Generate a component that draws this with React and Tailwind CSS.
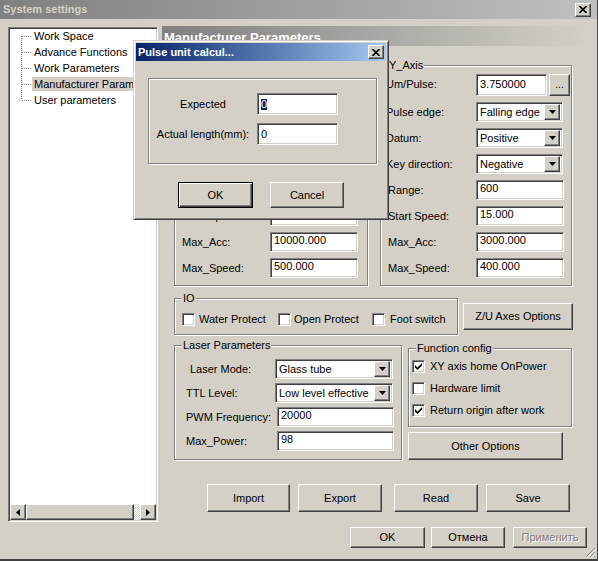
import React from 'react';

const sunken = 'border border-t-[#808080] border-l-[#808080] border-b-white border-r-white shadow-[inset_1px_1px_0_#404040,inset_-1px_-1px_0_#d4d0c8] bg-white';
const raised = 'border border-t-white border-l-white border-b-[#404040] border-r-[#404040] shadow-[inset_-1px_-1px_0_#808080] bg-[#d4d0c8]';
const etched = 'relative border border-[#808080] shadow-[inset_1px_1px_0_#fff,1px_1px_0_#fff]';

function Field({ value, className = '', selected }) {
  return (
    <div className={`${sunken} ${className} flex items-center pl-[3px] leading-none`}>
      {selected ? <span className="bg-[#0a246a] text-white">{value}</span> : value}
    </div>
  );
}

function Arrow({ dir = 'down' }) {
  if (dir === 'left') return <svg width="4" height="7" viewBox="0 0 4 7"><path d="M4 0v7L0 3.5z" fill="#000" /></svg>;
  if (dir === 'right') return <svg width="4" height="7" viewBox="0 0 4 7"><path d="M0 0v7l4-3.5z" fill="#000" /></svg>;
  return <svg width="7" height="4" viewBox="0 0 7 4"><path d="M0 0h7L3.5 4z" fill="#000" /></svg>;
}

function Combo({ value, className = '' }) {
  return (
    <div className={`${sunken} ${className} flex items-center pl-[3px] pr-[2px]`}>
      <span className="flex-1 whitespace-nowrap overflow-hidden">{value}</span>
      <div className={`${raised} w-[16px] h-[16px] shrink-0 flex items-center justify-center`}>
        <Arrow />
      </div>
    </div>
  );
}

function Btn({ children, className = '', disabled, isDefault }) {
  const base = isDefault
    ? 'border border-black bg-[#d4d0c8] shadow-[inset_1px_1px_0_#fff,inset_-1px_-1px_0_#404040,inset_-2px_-2px_0_#808080]'
    : raised;
  return (
    <div className={`${base} ${className} flex items-center justify-center ${disabled ? 'text-[#808080] [text-shadow:1px_1px_0_#fff]' : ''}`}>
      {children}
    </div>
  );
}

function Check({ checked }) {
  return (
    <div className={`${sunken} w-[13px] h-[13px] shrink-0 flex items-center justify-center`}>
      {checked && (
        <svg width="7" height="7" viewBox="0 0 7 7">
          <path d="M0 2 L2.5 4.5 L7 0 V2.5 L2.5 7 L0 4.5 Z" fill="#000" />
        </svg>
      )}
    </div>
  );
}

function XClose({ className = '' }) {
  return (
    <div className={`${raised} w-[16px] h-[14px] flex items-center justify-center ${className}`}>
      <svg width="8" height="7" viewBox="0 0 8 7">
        <path d="M0.5 0 L7.5 7 M7.5 0 L0.5 7" stroke="#000" strokeWidth="1.6" />
      </svg>
    </div>
  );
}

function Legend({ children }) {
  return <span className="absolute -top-[7px] left-[7px] px-[1px] bg-[#d4d0c8] leading-[13px]">{children}</span>;
}

function AxisGroup({ title, vals, className = '' }) {
  return (
    <div className={`${etched} ${className} pt-[7px] pb-[7px]`}>
      <Legend>{title}</Legend>
      <div className="flex flex-col gap-[6px]">
        <div className="flex items-center h-[23px]">
          <span className="w-[95px] pl-[5px]">Um/Pulse:</span>
          <Field value={vals[0]} className="w-[71px] h-[22px]" />
          <Btn className="w-[21px] h-[22px] ml-[2px] text-[10px]">...</Btn>
        </div>
        {[['Pulse edge:', vals[1]], ['Datum:', vals[2]], ['Key direction:', vals[3]]].map(([l, v]) => (
          <div key={l} className="flex items-center h-[20px]">
            <span className="w-[95px] pl-[5px]">{l}</span>
            <Combo value={v} className="w-[87px] h-[20px]" />
          </div>
        ))}
        {[['Range:', vals[4]], ['Start Speed:', vals[5]], ['Max_Acc:', vals[6]], ['Max_Speed:', vals[7]]].map(([l, v]) => (
          <div key={l} className="flex items-center h-[20px]">
            <span className="w-[95px] pl-[7px]">{l}</span>
            <Field value={v} className="w-[88px] h-[20px] items-start pt-[2px]" />
          </div>
        ))}
      </div>
    </div>
  );
}

const treeItems = ['Work Space', 'Advance Functions', 'Work Parameters', 'Manufacturer Parameters', 'User parameters'];

function Tree() {
  return (
    <div className={`${sunken} ml-[8px] mt-[8px] w-[150px] h-[495px] flex flex-col overflow-hidden`}>
      <div className="flex-1 pl-[1px]">
        {treeItems.map((t, i) => (
          <div key={t} className="flex items-center h-[16px]">
            <svg width="22" height="16" className="shrink-0">
              <line x1="11.5" y1={i === 0 ? 8 : 0} x2="11.5" y2={i === treeItems.length - 1 ? 8 : 16} stroke="#808080" strokeDasharray="1 1" />
              <line x1="12" y1="8.5" x2="22" y2="8.5" stroke="#808080" strokeDasharray="1 1" />
            </svg>
            <span className={`pl-[2px] pr-[2px] leading-[14px] whitespace-nowrap ${i === 3 ? 'bg-[#d4d0c8]' : ''}`}>{t}</span>
          </div>
        ))}
      </div>
      <div className="flex h-[16px] mx-[1px] mb-[1px]">
        <Btn className="w-[16px] h-[16px]"><Arrow dir="left" /></Btn>
        <Btn className="flex-1 h-[16px]" />
        <div className="w-[6px] h-[16px] bg-[repeating-conic-gradient(#fff_0_25%,#d4d0c8_0_50%)] bg-[length:2px_2px]" />
        <Btn className="w-[16px] h-[16px]"><Arrow dir="right" /></Btn>
      </div>
    </div>
  );
}

function Dialog() {
  return (
    <div className="absolute left-[133px] top-[40px] w-[256px] h-[180px] bg-[#d4d0c8] border border-t-[#d4d0c8] border-l-[#d4d0c8] border-b-[#404040] border-r-[#404040] shadow-[inset_1px_1px_0_#fff,inset_-1px_-1px_0_#808080] p-[2px] flex flex-col">
      <div className="h-[18px] bg-linear-to-r from-[#0a246a] to-[#a6caf0] flex items-center justify-between pl-[2px] pr-[2px]">
        <span className="text-white font-bold text-[11px]">Pulse unit calcul...</span>
        <XClose />
      </div>
      <div className={`${etched} mt-[17px] ml-[12px] w-[229px] h-[86px] pt-[14px] flex flex-col gap-[8px]`}>
        <div className="flex items-center h-[22px]">
          <span className="w-[108px] text-center">Expected</span>
          <Field value="0" selected className="w-[81px] h-[22px]" />
        </div>
        <div className="flex items-center h-[22px]">
          <span className="w-[108px] text-center">Actual length(mm):</span>
          <Field value="0" className="w-[81px] h-[22px]" />
        </div>
      </div>
      <div className="mt-[18px] ml-[42px] flex gap-[17px]">
        <Btn isDefault className="w-[75px] h-[26px]">OK</Btn>
        <Btn className="w-[74px] h-[26px]">Cancel</Btn>
      </div>
    </div>
  );
}

export default function App() {
  return (
    <div className="relative w-[598px] h-[561px] bg-[#d4d0c8] overflow-hidden border-r border-r-[#404040] border-b-2 border-b-[#404040] font-['Liberation_Sans',Arial,sans-serif] text-[11px] text-black">
      {/* window title */}
      <div className="h-[19px] bg-linear-to-r from-[#808080] to-[#c0c0c0] flex items-center justify-between pl-[3px] pr-[6px]">
        <span className="font-bold text-[#d4d0c8] text-[11px]">System settings</span>
        <XClose />
      </div>

      <div className="flex">
        <Tree />

        <div className="ml-[4px] mt-[7px] flex flex-col w-[433px]">
          <div className="h-[20px] w-[426px] bg-linear-to-r from-[#808080] to-[#d4d0c8] flex items-end pl-[2px]">
            <span className="text-white font-bold text-[13px] leading-[17px]">Manufacturer Parameters</span>
          </div>

          <div className="pl-[12px] flex flex-col">
            <div className="mt-[19px] flex gap-[12px]">
              <AxisGroup title="X_Axis" className="w-[194px]" vals={['6.329114', 'Falling edge', 'Positive', 'Negative', '900', '15.000', '10000.000', '500.000']} />
              <AxisGroup title="Y_Axis" className="w-[192px]" vals={['3.750000', 'Falling edge', 'Positive', 'Negative', '600', '15.000', '3000.000', '400.000']} />
            </div>

            <div className="mt-[12px] flex items-start gap-[5px]">
              <div className={`${etched} w-[284px] h-[37px] pl-[7px] pt-[14px]`}>
                <Legend>IO</Legend>
                <div className="flex items-center h-[13px]">
                  <div className="flex items-center gap-[4px] w-[96px]"><Check /><span>Water Protect</span></div>
                  <div className="flex items-center gap-[3px] w-[94px]"><Check /><span>Open Protect</span></div>
                  <div className="flex items-center gap-[5px]"><Check /><span>Foot switch</span></div>
                </div>
              </div>
              <Btn className="mt-[5px] w-[110px] h-[27px]">Z/U Axes Options</Btn>
            </div>

            <div className="mt-[10px] flex items-start gap-[6px]">
              <div className={`${etched} w-[228px] pt-[13px] pb-[8px] flex flex-col gap-[4px]`}>
                <Legend>Laser Parameters</Legend>
                <div className="flex items-center h-[20px]">
                  <span className="w-[100px] pl-[15px]">Laser Mode:</span>
                  <Combo value="Glass tube" className="w-[118px] h-[20px]" />
                </div>
                <div className="flex items-center h-[20px]">
                  <span className="w-[100px] pl-[11px]">TTL Level:</span>
                  <Combo value="Low level effective" className="w-[118px] h-[20px]" />
                </div>
                <div className="flex items-center h-[20px]">
                  <span className="w-[102px] pl-[11px]">PWM Frequency:</span>
                  <Field value="20000" className="w-[117px] h-[20px] items-start pt-[2px]" />
                </div>
                <div className="flex items-center h-[20px]">
                  <span className="w-[102px] pl-[11px]">Max_Power:</span>
                  <Field value="98" className="w-[117px] h-[20px] items-start pt-[2px]" />
                </div>
              </div>

              <div className="flex flex-col w-[164px]">
                <div className={`${etched} mt-[3px] w-[164px] pt-[6px] pb-[5px] pl-[3px]`}>
                  <Legend>Function config</Legend>
                  {[['XY axis home OnPower', true], ['Hardware limit', false], ['Return origin after work', true]].map(([t, c]) => (
                    <div key={t} className="flex items-center gap-[5px] h-[22px]">
                      <Check checked={c} />
                      <span>{t}</span>
                    </div>
                  ))}
                </div>
                <Btn className="mt-[5px] w-[155px] h-[28px]">Other Options</Btn>
              </div>
            </div>

            <div className="mt-[24px] ml-[33px] flex">
              <Btn className="w-[83px] h-[28px]">Import</Btn>
              <Btn className="ml-[8px] w-[84px] h-[28px]">Export</Btn>
              <Btn className="ml-[12px] w-[84px] h-[28px]">Read</Btn>
              <Btn className="ml-[8px] w-[84px] h-[28px]">Save</Btn>
            </div>

            <div className="mt-[15px] ml-[176px] flex">
              <Btn className="w-[75px] h-[21px]">OK</Btn>
              <Btn className="ml-[6px] w-[74px] h-[21px]">Отмена</Btn>
              <Btn disabled className="ml-[8px] w-[74px] h-[21px]">Применить</Btn>
            </div>
          </div>
        </div>
      </div>

      <Dialog />

      {/* size grip */}
      <svg className="absolute right-[1px] bottom-[1px]" width="11" height="11" viewBox="0 0 11 11">
        <path d="M10 1 L1 10 M10 5 L5 10 M10 9 L9 10" stroke="#808080" strokeWidth="1" />
        <path d="M11 2 L2 11 M11 6 L6 11" stroke="#fff" strokeWidth="1" />
      </svg>
    </div>
  );
}
